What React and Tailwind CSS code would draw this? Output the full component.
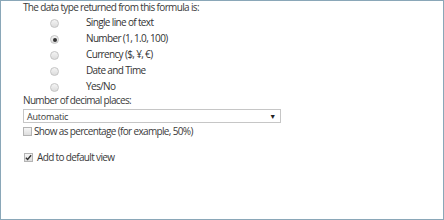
const options = [
  { label: "Single line of text", checked: false },
  { label: "Number (1, 1.0, 100)", checked: true },
  { label: "Currency ($, ¥, €)", checked: false },
  { label: "Date and Time", checked: false },
  { label: "Yes/No", checked: false },
];

function Radio({ checked }) {
  return (
    <span className="flex h-[9px] w-[9px] items-center justify-center rounded-full border border-[#c4c4c4] bg-gradient-to-b from-[#f4f4f4] to-[#dcdcdc]">
      {checked && <span className="h-[4px] w-[4px] rounded-full bg-[#333]" />}
    </span>
  );
}

function Checkbox({ checked }) {
  return (
    <span className="flex h-[9px] w-[9px] items-center justify-center border border-[#b4b4b4] bg-gradient-to-b from-[#f6f6f6] to-[#dedede]">
      {checked && (
        <svg viewBox="0 0 8 8" className="h-[7px] w-[7px]">
          <path d="M1 4.2 L3 6.2 L7 1.5" fill="none" stroke="#333" strokeWidth="1.6" />
        </svg>
      )}
    </span>
  );
}

export default function App() {
  return (
    <div
      className="h-[220px] w-[444px] border border-[#8aa7b8] bg-white text-[#3a3a3a] text-[10px] leading-[13px] tracking-[-0.65px]"
      style={{ fontFamily: '"Open Sans", "Liberation Sans", sans-serif' }}
    >
      <div className="pl-[22px]">
        <div>The data type returned from this formula is:</div>
        <div className="mt-[2px] flex flex-col gap-[3px]">
          {options.map((o) => (
            <div key={o.label} className="flex items-center">
              <div className="flex w-[63px] justify-center pt-[2px]">
                <Radio checked={o.checked} />
              </div>
              <span className="text-[#333]">{o.label}</span>
            </div>
          ))}
        </div>
        <div className="mt-[1px]">Number of decimal places:</div>
        <div className="mt-[2px] flex h-[14px] w-[258px] items-center justify-between border border-[#c6c6c6] pl-[3px] pr-[4px] text-[9px] tracking-[-0.2px]">
          <span>Automatic</span>
          <span className="text-[7px] text-[#222]">▼</span>
        </div>
        <div className="mt-[2px] flex items-center gap-[2px]">
          <Checkbox checked={false} />
          <span>Show as percentage (for example, 50%)</span>
        </div>
        <div className="mt-[13px] flex items-center gap-[4px] pl-[1px]">
          <Checkbox checked={true} />
          <span>Add to default view</span>
        </div>
      </div>
    </div>
  );
}
